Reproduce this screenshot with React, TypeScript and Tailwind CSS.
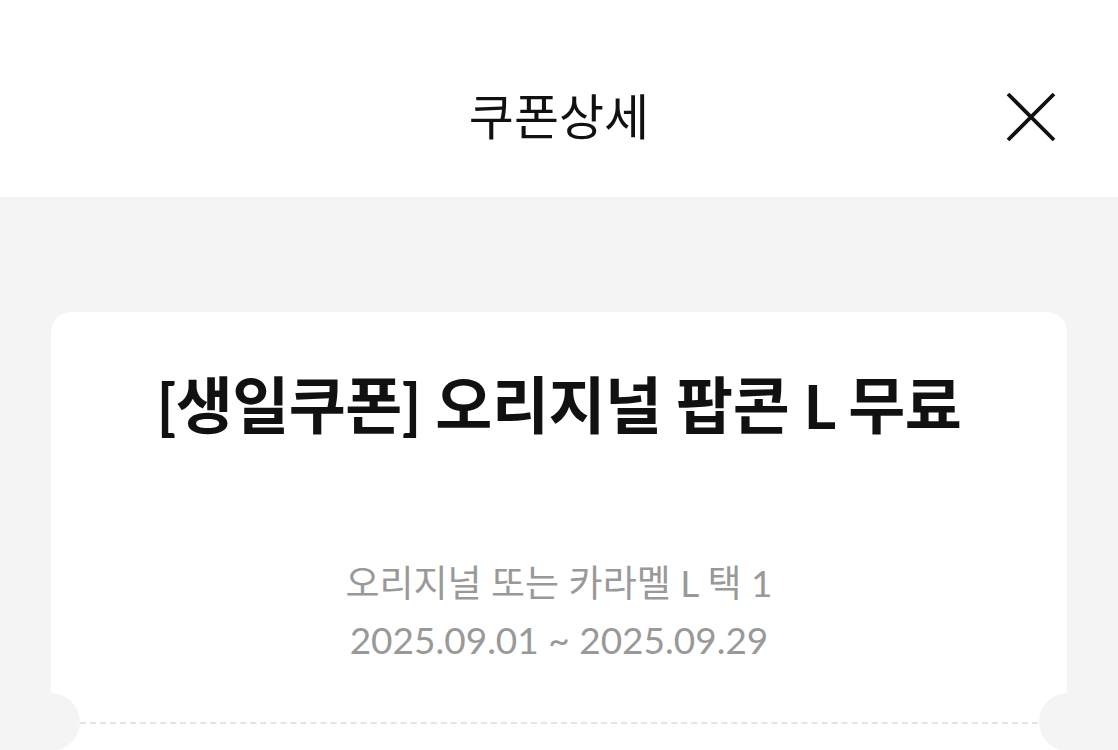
import React from "react";

export default function App() {
  return (
    <div
      className="min-h-[750px] w-[1118px] overflow-hidden bg-[#f4f4f4]"
      style={{ fontFamily: 'Lato, "Noto Sans CJK KR", sans-serif' }}
    >
      <header className="relative flex h-[197px] items-center justify-center bg-white pt-[36px]">
        <h1 className="text-[49px] font-normal leading-none text-[#111]">쿠폰상세</h1>
        <button className="absolute right-[62px] top-[92px] h-[50px] w-[50px]" aria-label="닫기">
          <svg viewBox="0 0 50 50" className="h-[50px] w-[50px]">
            <path d="M2 2 L48 48 M48 2 L2 48" stroke="#111" strokeWidth="3.8" strokeLinecap="butt" />
          </svg>
        </button>
      </header>
      <main className="px-[51px] pt-[115px]">
        <div className="relative rounded-[20px] bg-white">
          <div className="flex flex-col items-center pt-[58px]">
            <h2 className="text-[62px] font-bold leading-[70px] text-[#111] tracking-[-0.5px]">
              [생일쿠폰] 오리지널 팝콘 L 무료
            </h2>
            <div className="mt-[114px] flex flex-col items-center text-[37px] leading-[57px] text-[#999]">
              <p>오리지널 또는 카라멜 L 택 1</p>
              <p>2025.09.01 ~ 2025.09.29</p>
            </div>
          </div>
          <div className="relative mt-[54px] h-[300px]">
            <div className="mx-[29px] border-t-2 border-dashed border-[#e4e4e4]"></div>
            <div className="absolute left-[-79px] top-[-29px] h-[58px] w-[108px] rounded-full bg-[#f4f4f4]"></div>
            <div className="absolute right-[-80px] top-[-29px] h-[58px] w-[108px] rounded-full bg-[#f4f4f4]"></div>
          </div>
        </div>
      </main>
    </div>
  );
}
